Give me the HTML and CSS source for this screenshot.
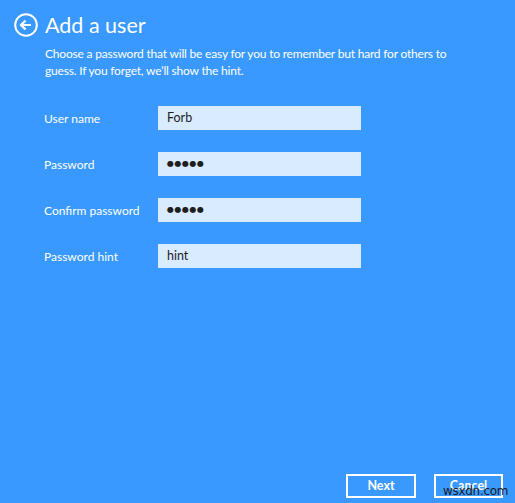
FILE: index.html
```html
<!DOCTYPE html>
<html>
<head>
<meta charset="utf-8">
<link rel="stylesheet" href="styles.css">
</head>
<body>
<div class="page">
  <div class="header">
    <svg class="back" width="24" height="24" viewBox="0 0 24 24">
      <circle cx="12" cy="12" r="10.8" fill="none" stroke="#fff" stroke-width="2"/>
      <path d="M17 12H7.5M11.5 7.6L7 12l4.5 4.4" fill="none" stroke="#fff" stroke-width="2.2"/>
    </svg>
    <h1 class="title">Add a user</h1>
  </div>
  <p class="desc">Choose a password that will be easy for you to remember but hard for others to guess. If you forget, we’ll show the hint.</p>
  <div class="form">
    <div class="row"><span class="label">User name</span><div class="box">Forb</div></div>
    <div class="row"><span class="label">Password</span><div class="box dots">●●●●●</div></div>
    <div class="row"><span class="label">Confirm password</span><div class="box dots">●●●●●</div></div>
    <div class="row"><span class="label">Password hint</span><div class="box">hint</div></div>
  </div>
  <div class="spacer"></div>
  <div class="buttons">
    <div class="btn">Next</div>
    <div class="btn cancel">Cancel<span class="wm">wsxdn.com</span></div>
  </div>
</div>
</body>
</html>
```
FILE: styles.css
```css
html, body {
  margin: 0;
  padding: 0;
}
body {
  background: #3999fe;
  font-family: "Lato", "Open Sans", sans-serif;
  color: #fff;
}
.page {
  height: 503px;
  display: flex;
  flex-direction: column;
  box-sizing: border-box;
  padding: 12px 0 0 0;
}
.header {
  display: flex;
  align-items: center;
  padding-left: 14px;
  gap: 7px;
}
.back {
  display: block;
}
.title {
  margin: 0;
  font-weight: 400;
  font-size: 21.5px;
  line-height: 26px;
}
.desc {
  margin: 7px 0 0 45px;
  width: 420px;
  font-size: 12px;
  letter-spacing: -0.2px;
  line-height: 17px;
}
.form {
  margin-top: 27px;
  display: flex;
  flex-direction: column;
  gap: 22px;
}
.row {
  display: flex;
  align-items: center;
  padding-left: 44px;
}
.label {
  width: 114px;
  font-size: 12px;
}
.box {
  width: 203px;
  height: 24px;
  box-sizing: border-box;
  background: #d8ebff;
  color: #1e1e1e;
  font-size: 12.5px;
  line-height: 24px;
  padding-left: 9px;
}
.box.dots {
  font-size: 8px;
  letter-spacing: 0.5px;
  font-family: "DejaVu Sans", sans-serif;
}
.spacer {
  flex: 1;
}
.buttons {
  display: flex;
  gap: 18px;
  padding: 0 0 5px 346px;
}
.btn {
  position: relative;
  width: 70px;
  height: 24px;
  box-sizing: border-box;
  border: 2px solid #fff;
  font-weight: 700;
  font-size: 12.5px;
  line-height: 20px;
  text-align: center;
}
.cancel {
  width: 69px;
}
.wm {
  position: absolute;
  left: 7px;
  top: 5px;
  font-family: "DejaVu Sans", sans-serif;
  font-weight: 400;
  font-size: 12px;
  letter-spacing: -0.3px;
  color: #1a1a1a;
  white-space: nowrap;
}
```
